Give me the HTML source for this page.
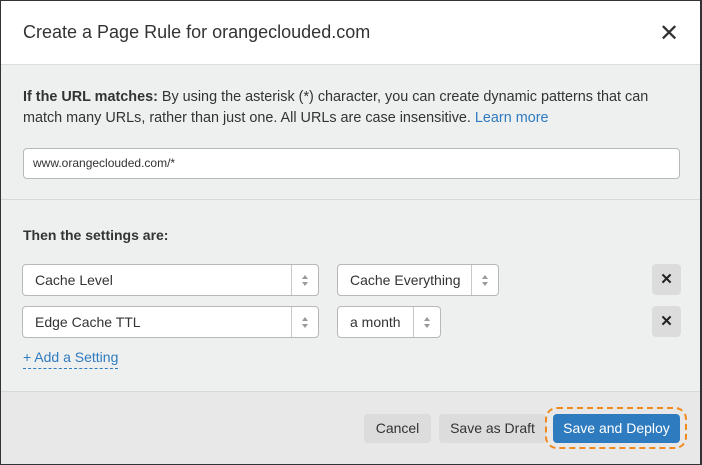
<html><head><style>
body{margin:0;width:702px;height:465px;font-family:"Liberation Sans",sans-serif;color:#333;position:relative;overflow:hidden}
.a{position:absolute}
.box{position:absolute;background:#fff;border:1px solid #b8b8b8;border-radius:4px;box-sizing:border-box;font-size:14px;line-height:30px;padding-left:12px}
.arr{position:absolute;right:0;top:0;bottom:0;width:26px;border-left:1px solid #c8c8c8}
.arr:before,.arr:after{content:"";position:absolute;left:10px;border-left:3px solid transparent;border-right:3px solid transparent}
.arr:before{top:10px;border-bottom:4px solid #999}
.arr:after{top:17px;border-top:4px solid #999}
.x{position:absolute;width:29px;height:31px;background:#dcdcdc;border-radius:4px;text-align:center;line-height:31px;font-size:15px;font-weight:bold;color:#222}
.btn{position:absolute;top:414px;height:29px;line-height:29px;background:#dcdcdc;border-radius:4px;font-size:14px;text-align:center;color:#333}
</style></head><body>
<div class="a" style="left:0;top:0;width:702px;height:465px;box-sizing:border-box;border:1px solid #333;border-right-width:2px;border-bottom-width:2px;background:#eef0f0"></div>
<div class="a" style="left:1px;top:1px;width:699px;height:63px;background:#fff;border-bottom:1px solid #ddd"></div>
<div class="a" style="left:23px;top:22px;font-size:18px;color:#333">Create a Page Rule for orangeclouded.com</div>
<div class="a" style="left:659px;top:19px;font-size:24px;color:#333;line-height:30px">&#x2715;</div>
<div class="a" style="left:23px;top:87px;width:680px;font-size:14.4px;line-height:21px;color:#333"><b>If the URL matches:</b> By using the asterisk (*) character, you can create dynamic patterns that can<br>match many URLs, rather than just one. All URLs are case insensitive. <span style="color:#2f7bbf">Learn more</span></div>
<div class="box" style="left:23px;top:148px;width:657px;height:31px;font-size:12px;line-height:29px;padding-left:9px">www.orangeclouded.com/*</div>
<div class="a" style="left:1px;top:199px;width:699px;height:1px;background:#d8d8d8"></div>
<div class="a" style="left:23px;top:227px;font-size:14px;font-weight:bold">Then the settings are:</div>
<div class="box" style="left:22px;top:264px;width:297px;height:32px">Cache Level<div class="arr"></div></div>
<div class="box" style="left:337px;top:264px;width:162px;height:32px">Cache Everything<div class="arr"></div></div>
<div class="x" style="left:652px;top:264px">✕</div>
<div class="box" style="left:22px;top:306px;width:297px;height:32px">Edge Cache TTL<div class="arr"></div></div>
<div class="box" style="left:337px;top:306px;width:104px;height:32px">a month<div class="arr"></div></div>
<div class="x" style="left:652px;top:306px">✕</div>
<div class="a" style="left:23px;top:349px;font-size:14px;color:#2f7bbf;padding-bottom:3px;border-bottom:1px dashed #2f7bbf">+ Add a Setting</div>
<div class="a" style="left:1px;top:391px;width:699px;height:72px;background:#e8e8e8;border-top:1px solid #d8d8d8"></div>
<div class="btn" style="left:364px;width:67px">Cancel</div>
<div class="btn" style="left:439px;width:107px">Save as Draft</div>
<div class="a" style="left:545px;top:407px;width:142px;height:42px;border:2px dashed #f08a1c;border-radius:12px;box-sizing:border-box"></div>
<div class="btn" style="left:553px;width:127px;background:#2f7bbf;color:#fff">Save and Deploy</div>
</body></html>
